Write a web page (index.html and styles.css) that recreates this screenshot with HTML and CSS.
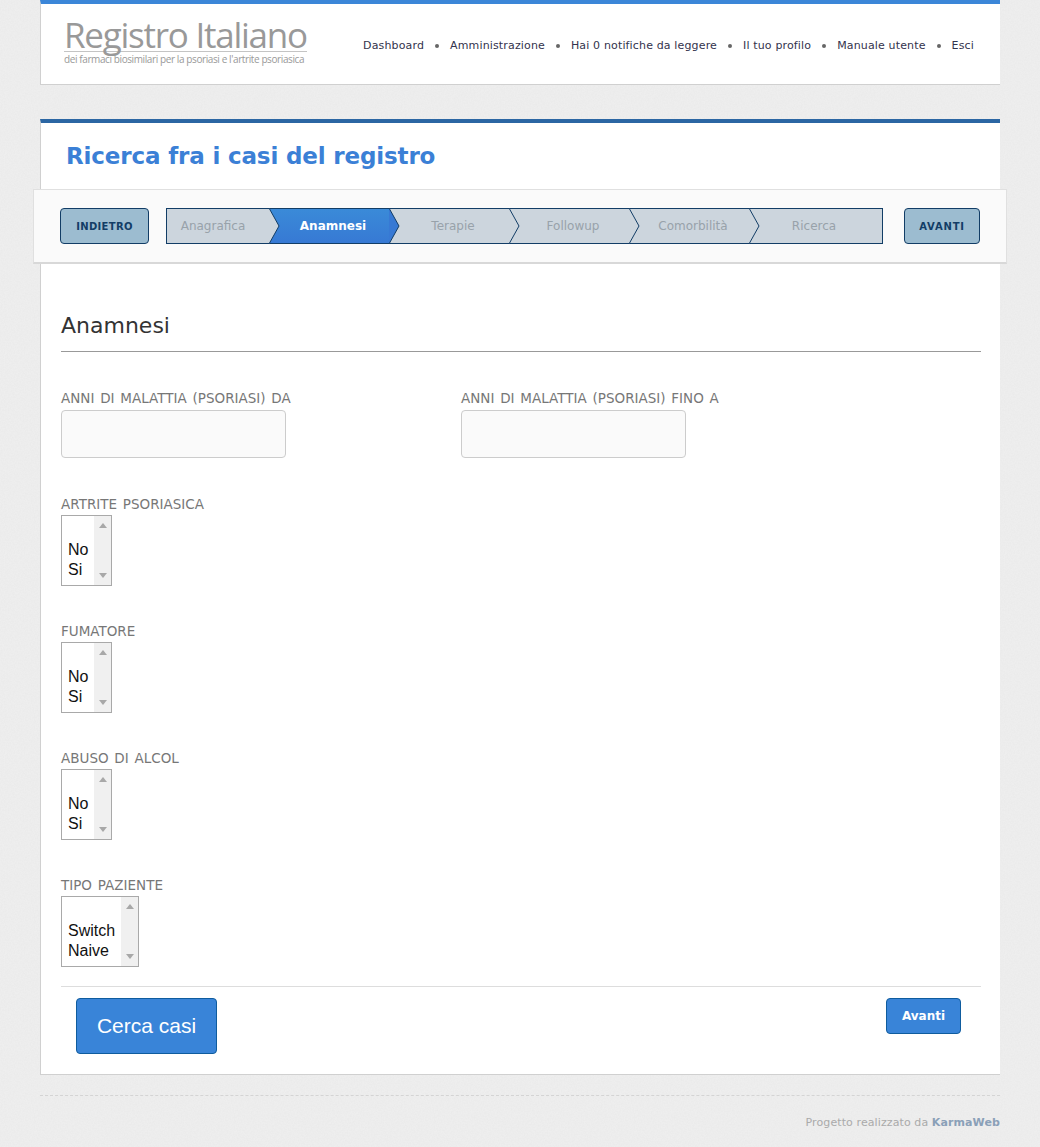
FILE: index.html
```html
<!DOCTYPE html>
<html lang="it">
<head>
    <meta charset="UTF-8">
    <meta name="viewport" content="width=device-width, initial-scale=1.0">
    <title>Registro Italiano</title>
    <link rel="stylesheet" href="styles.css">
</head>
<body>
    <div class="page">
        <header class="topbar">
            <a class="logo" href="#">
                <span class="logoTitle">Registro Italiano</span>
                <span class="logoSub">dei farmaci biosimilari per la psoriasi e l'artrite psoriasica</span>
            </a>
            <nav class="topnav">
                <a href="#">Dashboard</a>
                <a href="#">Amministrazione</a>
                <a href="#">Hai 0 notifiche da leggere</a>
                <a href="#">Il tuo profilo</a>
                <a href="#">Manuale utente</a>
                <a href="#">Esci</a>
            </nav>
        </header>

        <main class="card">
            <h1 class="pageTitle">Ricerca fra i casi del registro</h1>

            <div class="wizard">
                <button class="wizardButton back">INDIETRO</button>
                <ol class="steps">
                    <li class="step first">Anagrafica
                        <svg class="tip" width="11" height="36" viewBox="0 0 11 36"><path d="M0 0 L10 18 L0 36" /></svg>
                    </li>
                    <li class="step active">Anamnesi
                        <svg class="tip" width="11" height="36" viewBox="0 0 11 36"><path d="M0 0 L10 18 L0 36" /></svg>
                    </li>
                    <li class="step">Terapie
                        <svg class="tip" width="11" height="36" viewBox="0 0 11 36"><path d="M0 0 L10 18 L0 36" /></svg>
                    </li>
                    <li class="step">Followup
                        <svg class="tip" width="11" height="36" viewBox="0 0 11 36"><path d="M0 0 L10 18 L0 36" /></svg>
                    </li>
                    <li class="step">Comorbilità
                        <svg class="tip" width="11" height="36" viewBox="0 0 11 36"><path d="M0 0 L10 18 L0 36" /></svg>
                    </li>
                    <li class="step last">Ricerca</li>
                </ol>
                <button class="wizardButton next">AVANTI</button>
            </div>

            <form class="form">
                <h2 class="sectionTitle">Anamnesi</h2>

                <div class="row">
                    <div class="field wide">
                        <label>Anni di malattia (psoriasi) da</label>
                        <input type="text" class="textInput">
                    </div>
                    <div class="field wide">
                        <label>Anni di malattia (psoriasi) fino a</label>
                        <input type="text" class="textInput">
                    </div>
                </div>

                <div class="field">
                    <label>Artrite psoriasica</label>
                    <div class="listWrap">
                        <select class="listbox" size="3">
                            <option></option>
                            <option>No</option>
                            <option>Si</option>
                        </select>
                        <div class="fakeScroll"><span class="arrowUp"></span><span class="arrowDown"></span></div>
                    </div>
                </div>
                <div class="field">
                    <label>Fumatore</label>
                    <div class="listWrap">
                        <select class="listbox" size="3">
                            <option></option>
                            <option>No</option>
                            <option>Si</option>
                        </select>
                        <div class="fakeScroll"><span class="arrowUp"></span><span class="arrowDown"></span></div>
                    </div>
                </div>
                <div class="field">
                    <label>Abuso di alcol</label>
                    <div class="listWrap">
                        <select class="listbox" size="3">
                            <option></option>
                            <option>No</option>
                            <option>Si</option>
                        </select>
                        <div class="fakeScroll"><span class="arrowUp"></span><span class="arrowDown"></span></div>
                    </div>
                </div>
                <div class="field">
                    <label>Tipo paziente</label>
                    <div class="listWrap">
                        <select class="listbox" size="3">
                            <option></option>
                            <option>Switch</option>
                            <option>Naive</option>
                        </select>
                        <div class="fakeScroll"><span class="arrowUp"></span><span class="arrowDown"></span></div>
                    </div>
                </div>

                <div class="actions">
                    <button class="searchButton" type="button">Cerca casi</button>
                    <button class="nextButton" type="button">Avanti</button>
                </div>
            </form>
        </main>

        <footer class="footer">
            Progetto realizzato da <a href="#">KarmaWeb</a>
        </footer>
    </div>
</body>
</html>
```

FILE: styles.css
```css
body {
    margin: 0;
    background-color: #efefef;
    background-image: url("data:image/svg+xml,%3Csvg xmlns='http://www.w3.org/2000/svg' width='200' height='200'%3E%3Cfilter id='n'%3E%3CfeTurbulence type='fractalNoise' baseFrequency='0.7' numOctaves='2'/%3E%3CfeColorMatrix values='0 0 0 0 0.55 0 0 0 0 0.55 0 0 0 0 0.55 0 0 0 0.12 0'/%3E%3C/filter%3E%3Crect width='200' height='200' filter='url(%23n)'/%3E%3C/svg%3E");
    font-family: "DejaVu Sans", Verdana, sans-serif;
    color: #333;
}

.page {
    width: 960px;
    height: 1147px;
    margin-left: 40px;
}

a {
    text-decoration: none;
}

/* testata */
.topbar {
    display: flex;
    justify-content: space-between;
    box-sizing: border-box;
    height: 85px;
    padding: 0 26px 0 23px;
    background: white;
    border-top: 4px solid #3b86d8;
    border-left: 1px solid #d0d0d0;
    border-bottom: 1px solid #d0d0d0;
}

.logo {
    display: block;
    width: 243px;
    padding-top: 11px;
    color: #999;
}

.logoTitle {
    display: block;
    height: 36px;
    border-bottom: 1px solid #c4c4c4;
    font-family: "Open Sans", sans-serif;
    font-size: 35px;
    line-height: 40px;
    letter-spacing: -1.25px;
    white-space: nowrap;
}

.logoSub {
    display: block;
    font-family: "Open Sans", sans-serif;
    font-size: 10px;
    line-height: 14px;
    letter-spacing: -0.4px;
    white-space: nowrap;
}

.topnav {
    display: flex;
    align-items: center;
    height: 83px;
    font-size: 11px;
    letter-spacing: 0.15px;
}

.topnav a {
    color: #33334d;
}

.topnav a + a::before {
    content: "";
    display: inline-block;
    width: 4px;
    height: 4px;
    margin: 0 11px;
    border-radius: 50%;
    background: #666;
    vertical-align: 1px;
}

/* contenuto */
.card {
    margin-top: 34px;
    height: 956px;
    box-sizing: border-box;
    background: white;
    border-top: 4px solid #2b66a3;
    border-left: 1px solid #d0d0d0;
    border-bottom: 1px solid #d0d0d0;
}

.pageTitle {
    margin: 0;
    height: 66px;
    padding-left: 25px;
    font-size: 23px;
    line-height: 66px;
    letter-spacing: -0.15px;
    font-weight: bold;
    color: #3b80d6;
}

.wizard {
    display: flex;
    align-items: center;
    box-sizing: border-box;
    width: 974px;
    height: 75px;
    margin-left: -8px;
    padding: 0 26px;
    background: #fafafa;
    border: 1px solid #e0e0e0;
    border-bottom: 2px solid #d8d8d8;
}

.wizardButton {
    height: 36px;
    padding: 0;
    background: #9cbcd0;
    border: 1px solid #123d66;
    border-radius: 4px;
    font-family: inherit;
    font-size: 10px;
    font-weight: bold;
    letter-spacing: 0.3px;
    color: #123d66;
}

.wizardButton.back {
    width: 89px;
}

.wizardButton.next {
    width: 76px;
    letter-spacing: 0.8px;
}

.steps {
    display: flex;
    box-sizing: border-box;
    width: 717px;
    height: 36px;
    margin: 0 21px 0 17px;
    padding: 0;
    list-style: none;
    border: 1px solid #123d66;
    background: #ccd5dd;
    font-size: 12px;
    line-height: 34px;
    color: #98a2aa;
}

.step {
    position: relative;
    box-sizing: border-box;
    width: 120px;
    padding-left: 8px;
    text-align: center;
}

.step.first {
    width: 102px;
    padding: 0 10px 0 0;
}

.step.last {
    flex: 1;
    padding: 0 3px 0 0;
}

.step.active {
    background: linear-gradient(#3a8ad8, #3779d4);
    color: white;
    font-weight: bold;
}

.tip {
    position: absolute;
    top: -1px;
    left: 100%;
    z-index: 2;
    display: block;
}

.tip path {
    fill: #ccd5dd;
    stroke: #123d66;
    stroke-width: 1;
}

.active .tip path {
    fill: #3779d4;
}

/* modulo */
.form {
    padding: 0 19px 0 20px;
}

.sectionTitle {
    height: 88px;
    box-sizing: border-box;
    margin: 0 0 37px;
    padding-top: 47px;
    border-bottom: 1px solid #999;
    font-size: 22px;
    line-height: 30px;
    font-weight: normal;
    color: #333;
}

.row {
    display: flex;
}

.field {
    margin-bottom: 36px;
}

.field.wide {
    width: 400px;
    margin-bottom: 37px;
}

.field label {
    display: block;
    font-size: 13.5px;
    line-height: 19px;
    word-spacing: 1.5px;
    text-transform: uppercase;
    color: #777;
}

.textInput {
    display: block;
    box-sizing: border-box;
    width: 225px;
    height: 48px;
    margin-top: 2px;
    background: #fafafa;
    border: 1px solid #ccc;
    border-radius: 4px;
}

.listWrap {
    display: flex;
    box-sizing: border-box;
    width: fit-content;
    height: 71px;
    margin-top: 1px;
    background: white;
    border: 1px solid #a9a9a9;
}

.listbox {
    display: block;
    box-sizing: border-box;
    height: 69px;
    padding: 5px 0 4px;
    overflow: hidden;
    background: white;
    border: none;
    outline: none;
    font-family: "Liberation Sans", Arial, sans-serif;
    font-size: 16px;
    color: #111;
}

.listbox option {
    min-height: 20px;
    line-height: 20px;
    padding: 0 6px;
}

/* scrollbar disegnata a mano, con le frecce disabilitate */
.fakeScroll {
    display: flex;
    flex-direction: column;
    justify-content: space-between;
    align-items: center;
    box-sizing: border-box;
    width: 17px;
    padding: 7px 0;
    background: #f0f0f0;
}

.arrowUp,
.arrowDown {
    width: 0;
    height: 0;
    border-left: 4px solid transparent;
    border-right: 4px solid transparent;
}

.arrowUp {
    border-bottom: 5px solid #a8a8a8;
}

.arrowDown {
    border-top: 5px solid #a8a8a8;
}

.actions {
    display: flex;
    justify-content: space-between;
    align-items: flex-start;
    margin-top: -17px;
    padding: 11px 20px 0 15px;
    border-top: 1px solid #ddd;
}

.searchButton {
    width: 141px;
    height: 56px;
    padding: 0;
    background: #3984d8;
    border: 1px solid #0f5c9e;
    border-radius: 4px;
    font-family: "Liberation Sans", Arial, sans-serif;
    font-size: 21px;
    color: white;
}

.nextButton {
    width: 75px;
    height: 36px;
    padding: 0;
    background: #3984d8;
    border: 1px solid #0f5c9e;
    border-radius: 4px;
    font-family: inherit;
    font-size: 12px;
    font-weight: bold;
    color: white;
}

/* piede */
.footer {
    margin-top: 20px;
    padding-top: 18px;
    border-top: 1px dashed #d4d4d4;
    text-align: right;
    font-size: 11px;
    line-height: 18px;
    letter-spacing: 0.1px;
    color: #aaa;
}

.footer a {
    font-weight: bold;
    color: #8aa0b8;
}
```
